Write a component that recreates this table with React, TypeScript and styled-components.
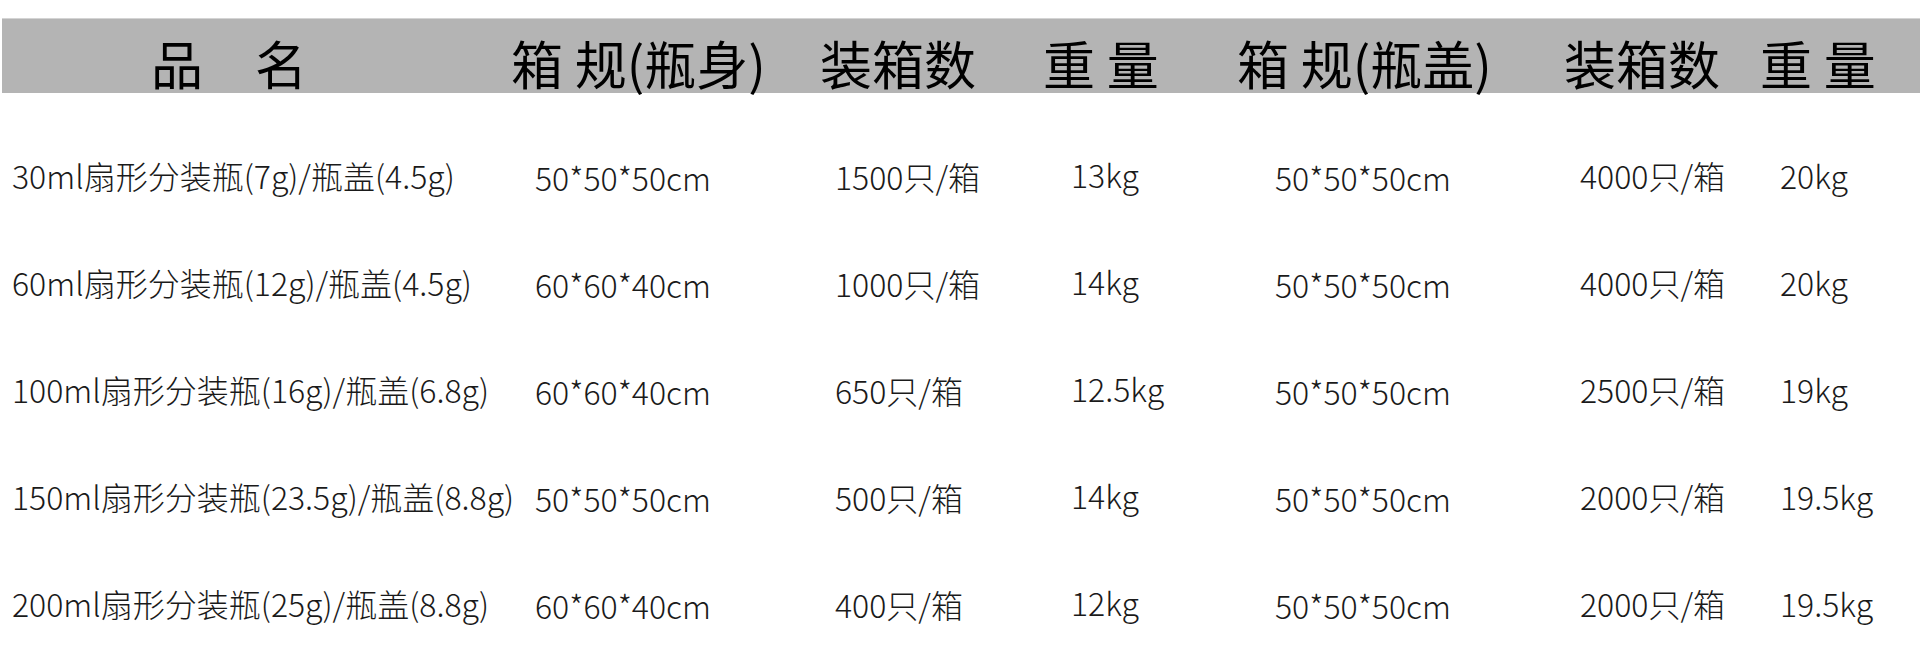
import * as React from 'react';
import styled, { createGlobalStyle } from 'styled-components';

const GlobalStyle = createGlobalStyle`
    html, body {
        margin: 0;
        padding: 0;
        background: #fff;
    }
    body {
        font-family: 'Noto Sans CJK SC', 'Noto Sans', sans-serif;
        color: #111;
    }
`;

const Sheet = styled.div`
    width: 1920px;
    height: 659px;
    padding-top: 18px;
    box-sizing: border-box;
    overflow: hidden;
`;

const HeaderBar = styled.div`
    margin-left: 2px;
    height: 75px;
    padding-left: 149px;
    box-sizing: border-box;
    background: #b4b4b4;
    border-top: 1px solid #d4d4d4;
    display: grid;
    grid-template-columns: 360px 309px 223px 194px 327px 196px 1fr;
    align-items: center;
`;

const HeaderCell = styled.div`
    font-size: 52px;
    line-height: 1;
    padding-top: 14px;
    color: #000;
    white-space: pre;
`;

const Body = styled.div`
    margin-top: 27px;
    display: flex;
    flex-direction: column;
`;

const Row = styled.div`
    height: 107px;
    padding-left: 12px;
    display: grid;
    grid-template-columns: 523px 300px 236px 204px 305px 200px 1fr;
    align-items: center;
`;

const Cell = styled.div<{ $shift: number }>`
    font-size: 32px;
    font-weight: 300;
    line-height: 1;
    padding-top: ${(p) => p.$shift}px;
    color: #1a1a1a;
    white-space: nowrap;
`;

const headers = ['品　名', '箱 规(瓶身)', '装箱数', '重 量', '箱 规(瓶盖)', '装箱数', '重 量'];

// 每列的细微上下偏移
const shifts = [3, 7, 4, 0, 7, 3, 2];

const rows = [
    ['30ml扇形分装瓶(7g)/瓶盖(4.5g)', '50*50*50cm', '1500只/箱', '13kg', '50*50*50cm', '4000只/箱', '20kg'],
    ['60ml扇形分装瓶(12g)/瓶盖(4.5g)', '60*60*40cm', '1000只/箱', '14kg', '50*50*50cm', '4000只/箱', '20kg'],
    ['100ml扇形分装瓶(16g)/瓶盖(6.8g)', '60*60*40cm', '650只/箱', '12.5kg', '50*50*50cm', '2500只/箱', '19kg'],
    ['150ml扇形分装瓶(23.5g)/瓶盖(8.8g)', '50*50*50cm', '500只/箱', '14kg', '50*50*50cm', '2000只/箱', '19.5kg'],
    ['200ml扇形分装瓶(25g)/瓶盖(8.8g)', '60*60*40cm', '400只/箱', '12kg', '50*50*50cm', '2000只/箱', '19.5kg']
];

export default function App() {
    return (
        <Sheet>
            <GlobalStyle />
            <HeaderBar>
                {headers.map((h, i) => (
                    <HeaderCell key={i}>{h}</HeaderCell>
                ))}
            </HeaderBar>
            <Body>
                {rows.map((r, ri) => (
                    <Row key={ri}>
                        {r.map((c, ci) => (
                            <Cell key={ci} $shift={shifts[ci]}>{c}</Cell>
                        ))}
                    </Row>
                ))}
            </Body>
        </Sheet>
    );
}
